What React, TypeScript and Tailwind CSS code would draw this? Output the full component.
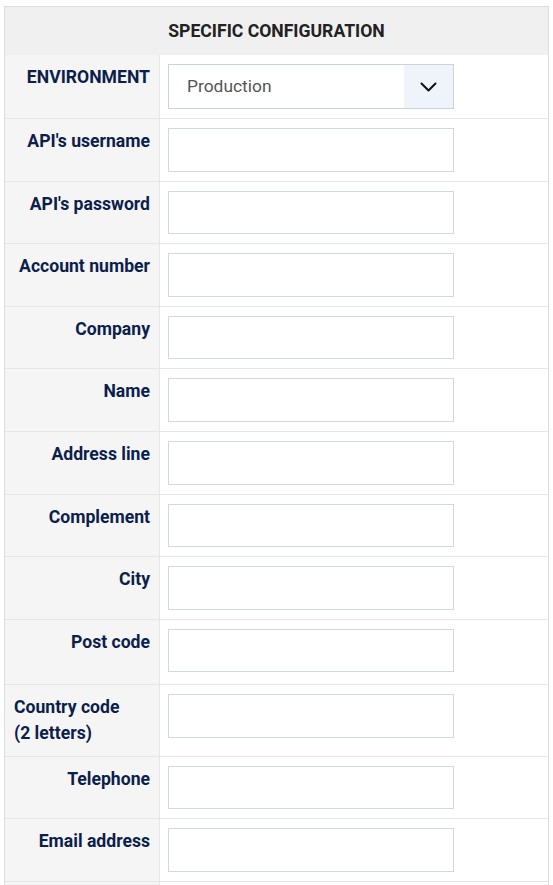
import React from "react";

const rows: { label: string; extraPb?: boolean }[] = [
  { label: "API's username" },
  { label: "API's password" },
  { label: "Account number" },
  { label: "Company" },
  { label: "Name" },
  { label: "Address line" },
  { label: "Complement" },
  { label: "City" },
  { label: "Post code", extraPb: true },
  { label: "Country code (2\u00a0letters)" },
  { label: "Telephone" },
  { label: "Email address" },
  { label: "" },
];

function Label({ text }: { text: string }) {
  return (
    <div className="w-[155px] shrink-0 bg-[#f5f5f5] border-r border-[#e6e6e6] px-[9px] pt-[10px] pb-[9px] text-right">
      <span className="inline-block text-left text-[17.6px] leading-[25.7px] font-bold text-[#0c1e4c]">
        {text}
      </span>
    </div>
  );
}

export default function App() {
  return (
    <div
      className="bg-white pt-[6px] pl-[4px] min-h-[885px]"
      style={{ fontFamily: "Roboto, 'Liberation Sans', Arial, sans-serif" }}
    >
      <div className="w-[545px] border border-[#dddddd] bg-white">
        <div className="h-[48px] bg-[#f0f0f0] flex items-center justify-center">
          <span className="text-[17.6px] font-bold text-[#222222] uppercase">
            Specific configuration
          </span>
        </div>
        <div className="flex">
          <Label text="ENVIRONMENT" />
          <div className="pl-[8px] py-[9px]">
            <div className="w-[286px] h-[45px] border border-[#ccd2da] flex bg-white">
              <div className="flex-1 flex items-center pl-[18px] pb-[1px] text-[17.4px] text-[#555555]">
                Production
              </div>
              <div className="w-[49px] bg-[#eff3fa] flex items-center justify-center">
                <svg width="17" height="10" viewBox="0 0 17 10" fill="none">
                  <path
                    d="M1.5 1.5 L8.5 8.5 L15.5 1.5"
                    stroke="#111111"
                    strokeWidth="2"
                    strokeLinecap="round"
                    strokeLinejoin="round"
                  />
                </svg>
              </div>
            </div>
          </div>
        </div>
        {rows.map((r, i) => (
          <div key={i} className="flex border-t border-[#e6e6e6]">
            <Label text={r.label} />
            <div className={r.extraPb ? "pl-[8px] pt-[9px] pb-[12px]" : "pl-[8px] py-[9px]"}>
              <div className="w-[286px] h-[43.6px] border border-[#d3d8df] bg-white" />
            </div>
          </div>
        ))}
      </div>
    </div>
  );
}
